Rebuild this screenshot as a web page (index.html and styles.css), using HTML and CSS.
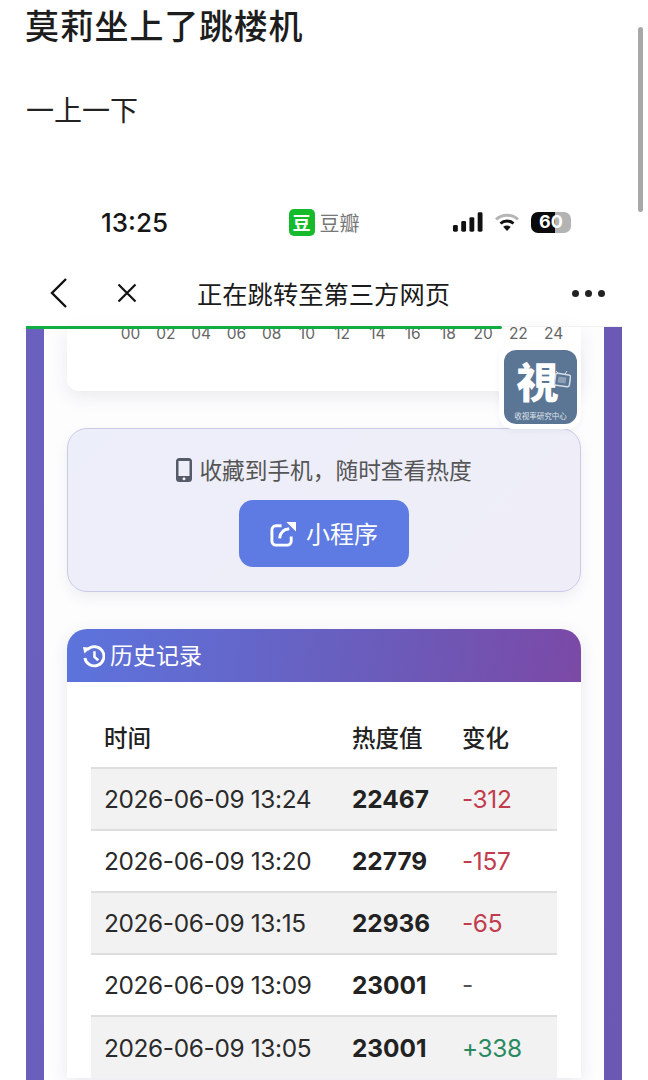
FILE: index.html
```html
<!DOCTYPE html>
<html lang="zh">
<head>
<meta charset="utf-8">
<title>莫莉坐上了跳楼机</title>
<link rel="stylesheet" href="styles.css">
</head>
<body>
<div class="page">
  <header class="post">
    <h1 class="post-title">莫莉坐上了跳楼机</h1>
    <p class="post-text">一上一下</p>
  </header>
  <div class="scrollbar"></div>
  <main class="shot">
    <div class="status">
      <span class="time">13:25</span>
      <div class="app">
        <span class="app-icon">豆</span>
        <span class="app-name">豆瓣</span>
      </div>
      <div class="status-icons">
        <svg class="signal" width="30" height="20" viewBox="0 0 31 20"><rect x="0" y="13" width="5" height="7" rx="1.5"/><rect x="8.5" y="9" width="5" height="11" rx="1.5"/><rect x="17" y="5" width="5" height="15" rx="1.5"/><rect x="25.5" y="0" width="5" height="20" rx="1.5"/></svg>
        <svg class="wifi" width="24" height="18" viewBox="0 0 24 18"><path d="M1 6.500C7 .8 17 .8 23 6.500" fill="none" stroke="#b5b5b5" stroke-width="3"/><path d="M5.500 10.500c3.700-3.300 9.300-3.300 13 0" fill="none" stroke="#111" stroke-width="3"/><path d="M12 18l-3.800-4.200c2.200-1.600 5.400-1.600 7.600 0z" fill="#111"/></svg>
        <div class="battery"><span class="battery-num">60</span></div>
      </div>
    </div>
    <nav class="nav">
      <div class="nav-left">
        <svg width="20" height="32" viewBox="0 0 20 32"><path d="M17 2L3 16l14 14" fill="none" stroke="#111" stroke-width="2.400"/></svg>
        <svg class="nav-close" width="20" height="20" viewBox="0 0 20 20"><path d="M1.500 1.500l17 17M18.500 1.500l-17 17" fill="none" stroke="#111" stroke-width="2.200"/></svg>
      </div>
      <div class="nav-title">正在跳转至第三方网页</div>
      <div class="nav-more"><i></i><i></i><i></i></div>
    </nav>
    <div class="progress"><div class="progress-fill"></div></div>
    <div class="gradient-frame">
      <div class="content">
        <section class="chart-card">
          <div class="axis">
            <span>00</span><span>02</span><span>04</span><span>06</span><span>08</span><span>10</span><span>12</span><span>14</span><span>16</span><span>18</span><span>20</span><span>22</span><span>24</span>
          </div>
        </section>
        <div class="logo">
          <div class="logo-inner">
            <span class="logo-glyph">視</span>
            <svg class="logo-tv" width="17" height="17" viewBox="0 0 17 17"><path d="M5 3L2 0M11 3l2-3" stroke="#d7dde5" stroke-width="1"/><rect x="1" y="3" width="15" height="12" rx="2" transform="rotate(8 8 9)" fill="#5b7595" stroke="#d7dde5" stroke-width="1.500"/><rect x="4" y="6" width="8" height="6" transform="rotate(8 8 9)" fill="#8ea0b6"/></svg>
            <span class="logo-caption">收视率研究中心</span>
          </div>
        </div>
        <section class="promo">
          <div class="promo-text">
            <svg width="16" height="24" viewBox="0 0 16 24"><path fill-rule="evenodd" fill="#555a66" d="M3.500 0h9A3.500 3.500 0 0 1 16 3.500v17a3.500 3.500 0 0 1-3.500 3.500h-9A3.500 3.500 0 0 1 0 20.500v-17A3.500 3.500 0 0 1 3.500 0zM2.500 3v15h11V3zM8 19.300a1.500 1.500 0 1 0 0 3 1.500 1.500 0 0 0 0-3z"/></svg>
            <span>收藏到手机，随时查看热度</span>
          </div>
          <div class="promo-btn">
            <svg width="26" height="26" viewBox="0 0 27 27"><path d="M12 5H6a4 4 0 0 0-4 4v12a4 4 0 0 0 4 4h12a4 4 0 0 0 4-4v-5" fill="none" stroke="#fff" stroke-width="3"/><path d="M10 18c.5-6 4-9.500 10-10" fill="none" stroke="#fff" stroke-width="3"/><path d="M17 1h10v10z" fill="#fff"/></svg>
            <span class="promo-btn-text">小程序</span>
          </div>
        </section>
        <section class="history">
          <div class="history-head">
            <svg width="23" height="24" viewBox="0 0 24 24"><path d="M5.500 5.500A10 10 0 1 1 3 14" fill="none" stroke="#fff" stroke-width="3"/><path d="M1 2.500l8 1-6.500 6z" fill="#fff"/><path d="M13 7v6l4 3.500" fill="none" stroke="#fff" stroke-width="2.600"/></svg>
            <span class="history-title">历史记录</span>
          </div>
          <div class="history-body">
            <table class="table">
              <thead>
                <tr><th class="col-time">时间</th><th class="col-val">热度值</th><th>变化</th></tr>
              </thead>
              <tbody>
                <tr><td>2026-06-09 13:24</td><td class="val">22467</td><td class="down">-312</td></tr>
                <tr><td>2026-06-09 13:20</td><td class="val">22779</td><td class="down">-157</td></tr>
                <tr><td>2026-06-09 13:15</td><td class="val">22936</td><td class="down">-65</td></tr>
                <tr><td>2026-06-09 13:09</td><td class="val">23001</td><td class="flat">-</td></tr>
                <tr><td>2026-06-09 13:05</td><td class="val">23001</td><td class="up">+338</td></tr>
              </tbody>
            </table>
          </div>
        </section>
      </div>
    </div>
  </main>
</div>
</body>
</html>
```
FILE: styles.css
```css
* { box-sizing: border-box; }
html, body { margin: 0; padding: 0; background: #fff; }
body { font-family: Inter, "Noto Sans CJK SC", sans-serif; color: #222; overflow: hidden; }
.page { position: relative; width: 648px; height: 1080px; overflow: hidden; background: #fff; }

.post { height: 190px; padding: 5px 0 0 25px; }
.post-title { margin: 0; font-family: "Noto Sans CJK SC", sans-serif; font-size: 34px; font-weight: 500; line-height: 40px; letter-spacing: .8px; color: #1d1d1d; }
.post-text { margin: 44px 0 0; padding-left: 1px; font-family: "Noto Sans CJK SC", sans-serif; font-size: 28px; line-height: 40px; color: #222; }
.scrollbar { position: absolute; left: 638px; top: 27px; width: 5px; height: 185px; border-radius: 3px; background: #a8a8a8; }

.shot { margin: 0 26px; }
.status { display: grid; grid-template-columns: 1fr auto 1fr; align-items: center; height: 64px; margin-bottom: 6px; }
.time { padding-left: 75px; font-size: 26px; font-weight: 500; color: #161616; }
.app { display: flex; align-items: center; gap: 5px; }
.app-icon { display: flex; align-items: center; justify-content: center; width: 26px; height: 27px; border-radius: 5px; background: #16bb2b; color: #fff; font-family: "Noto Sans CJK SC", sans-serif; font-size: 18px; font-weight: 700; }
.app-name { font-family: "Noto Sans CJK SC", sans-serif; font-size: 20px; color: #777; }
.status-icons { display: flex; align-items: center; justify-content: flex-end; gap: 12px; padding-right: 51px; }
.signal { fill: #111; }
.battery { display: flex; align-items: center; justify-content: center; width: 40px; height: 21px; border-radius: 7px; background: linear-gradient(90deg, #0b0b0b 0 61%, #b3b3b3 61% 100%); }
.battery-num { font-size: 18px; font-weight: 700; line-height: 1; color: #fff; }

.nav { display: grid; grid-template-columns: 1fr auto 1fr; align-items: center; height: 66px; }
.nav-left { display: flex; align-items: center; gap: 48px; padding-left: 23px; }
.nav-title { padding-right: 1px; font-family: "Noto Sans CJK SC", sans-serif; font-size: 25.300px; color: #1b1b1b; }
.nav-more { display: flex; justify-content: flex-end; gap: 6px; padding-right: 17px; }
.nav-more i { width: 7px; height: 7px; border-radius: 50%; background: #222; }

.progress { position: relative; z-index: 2; height: 3px; background: linear-gradient(#f1f1f1 0 1px, transparent 1px); }
.progress-fill { width: 476px; height: 3px; border-radius: 0 2px 2px 0; background: #10ad43; }

.gradient-frame { height: 760px; margin-top: -3px; padding: 0 18px; background: linear-gradient(100deg, #6a60be, #6b58b3); }
.content { position: relative; height: 100%; padding: 0 23px; background: #fdfdfe; }

.chart-card { height: 65px; border-radius: 0 0 12px 12px; background: #fff; box-shadow: 0 6px 18px rgba(60, 60, 90, .09); }
.axis { display: grid; grid-template-columns: repeat(13, 35.250px); padding-left: 46px; }
.axis span { text-align: center; font-size: 15.500px; line-height: 15px; color: #666; }

.logo { position: absolute; left: 455px; top: 18px; width: 82px; height: 85px; padding: 6px 4px 5px 5px; border-radius: 14px; background: #fff; box-shadow: 0 2px 6px rgba(60, 60, 90, .05); z-index: 1; }
.logo-inner { position: relative; display: flex; flex-direction: column; align-items: center; height: 100%; border-radius: 12px; background: #5b7595; overflow: hidden; }
.logo-glyph { font-family: "Noto Sans CJK TC", sans-serif; font-size: 42px; font-weight: 900; line-height: 60px; margin-right: 6px; color: #fff; }
.logo-tv { position: absolute; left: 50px; top: 21px; }
.logo-caption { font-family: "Noto Sans CJK SC", sans-serif; font-size: 7.500px; line-height: 11px; color: #dfe4ea; white-space: nowrap; }

.promo { display: flex; flex-direction: column; align-items: center; height: 164px; margin-top: 37px; padding-top: 26px; border: 1px solid #c9cae6; border-radius: 20px; background: linear-gradient(135deg, #eceef9, #efeef8); box-shadow: 0 6px 14px rgba(60, 60, 90, .07); }
.promo-text { display: flex; align-items: center; gap: 7px; font-family: "Noto Sans CJK SC", sans-serif; font-size: 22.700px; line-height: 30px; color: #555; }
.promo-btn { display: flex; align-items: center; justify-content: center; gap: 10px; width: 170px; height: 67px; margin-top: 15px; border-radius: 14px; background: #5e7be3; font-family: "Noto Sans CJK SC", sans-serif; font-size: 24px; color: #fff; }
.promo-btn-text { padding-bottom: 2px; }

.history { margin-top: 37px; border-radius: 20px 20px 0 0; background: #fff; box-shadow: 0 4px 16px rgba(60, 60, 90, .1); }
.history-head { display: flex; align-items: center; gap: 5px; height: 53px; padding-left: 15px; border-radius: 20px 20px 0 0; background: linear-gradient(95deg, #5c74dd, #6a5cbb 60%, #7b49a6); font-family: "Noto Sans CJK SC", sans-serif; font-size: 23px; color: #fff; }
.history-title { padding-bottom: 4px; }
.history-body { padding: 24px 24px 0; }
.table { width: 100%; border-collapse: collapse; table-layout: fixed; }
.table th { height: 62px; padding: 0 0 0 13px; text-align: left; font-family: "Noto Sans CJK SC", sans-serif; font-size: 23.500px; font-weight: 500; color: #222; }
.col-time { width: 248px; }
.col-val { width: 110px; }
.table td { height: 62px; padding: 0 0 0 13px; border-top: 2px solid #dedede; font-size: 24.400px; letter-spacing: -.35px; color: #2a2a2a; white-space: nowrap; }
.table tbody tr:nth-child(odd) td { background: #f2f2f2; }
.table td.val { font-weight: 700; letter-spacing: 0; color: #222; }
.down { color: #c13d4d !important; }
.up { color: #29895f !important; }
.flat { color: #555 !important; }
```
